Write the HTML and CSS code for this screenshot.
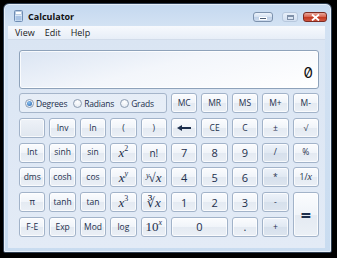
FILE: index.html
```html
<!DOCTYPE html>
<html lang="en">
  <head>
    <meta charset="UTF-8" />
    <title>Calculator</title>
    <link rel="stylesheet" href="styles.css">
  </head>
  <body>
    <div class="window">
      <div class="titlebar">
        <svg class="app-icon" width="9" height="12" viewBox="0 0 9 12">
          <rect x="0.5" y="0.5" width="8" height="11" rx="1" fill="#dbe8f7" stroke="#6f8db4" />
          <rect x="1.5" y="1.5" width="6" height="3" fill="#ffffff" stroke="#9ab3d3" stroke-width="0.6" />
          <rect x="1.5" y="6" width="6" height="4.5" fill="#a9c3e4" />
        </svg>
        <span class="title">Calculator</span>
        <div class="caption-buttons">
          <span class="cap cap-min"><i></i></span>
          <span class="cap cap-max"><i></i></span>
          <span class="cap cap-close">
            <svg width="9" height="7" viewBox="0 0 9 7">
              <path d="M1 0.5 L8 6.5 M8 0.5 L1 6.5" stroke="#fff" stroke-width="1.8" />
            </svg>
          </span>
        </div>
      </div>
      <div class="menubar">
        <span>View</span>
        <span>Edit</span>
        <span>Help</span>
      </div>
      <div class="client">
        <div class="display">0</div>
        <div class="keypad">
          <div class="angles">
            <label><span class="radio checked"></span>Degrees</label>
            <label><span class="radio"></span>Radians</label>
            <label><span class="radio"></span>Grads</label>
          </div>
          <button class="key">MC</button>
          <button class="key">MR</button>
          <button class="key">MS</button>
          <button class="key">M+</button>
          <button class="key">M-</button>

          <button class="key key-blank"></button>
          <button class="key">Inv</button>
          <button class="key">ln</button>
          <button class="key">(</button>
          <button class="key">)</button>
          <button class="key">
            <svg width="14" height="6" viewBox="0 0 14 6">
              <path d="M0 3 L5 0 L5 6 Z" fill="#1d2f4c" />
              <rect x="4" y="2" width="10" height="2" fill="#1d2f4c" />
            </svg>
          </button>
          <button class="key">CE</button>
          <button class="key">C</button>
          <button class="key">±</button>
          <button class="key">√</button>

          <button class="key">Int</button>
          <button class="key">sinh</button>
          <button class="key">sin</button>
          <button class="key key-math"><i>x</i><sup>2</sup></button>
          <button class="key key-big">n!</button>
          <button class="key key-digit">7</button>
          <button class="key key-digit">8</button>
          <button class="key key-digit">9</button>
          <button class="key key-op">/</button>
          <button class="key">%</button>

          <button class="key">dms</button>
          <button class="key">cosh</button>
          <button class="key">cos</button>
          <button class="key key-math"><i>x</i><sup><i>y</i></sup></button>
          <button class="key key-math"><span class="root"><sup><i>y</i></sup>√</span><i>x</i></button>
          <button class="key key-digit">4</button>
          <button class="key key-digit">5</button>
          <button class="key key-digit">6</button>
          <button class="key key-op">*</button>
          <button class="key">1/<i class="serif">x</i></button>

          <button class="key">π</button>
          <button class="key">tanh</button>
          <button class="key">tan</button>
          <button class="key key-math"><i>x</i><sup>3</sup></button>
          <button class="key key-math">∛<i>x</i></button>
          <button class="key key-digit">1</button>
          <button class="key key-digit">2</button>
          <button class="key key-digit">3</button>
          <button class="key key-op">-</button>
          <button class="key key-equals">=</button>

          <button class="key">F-E</button>
          <button class="key">Exp</button>
          <button class="key">Mod</button>
          <button class="key">log</button>
          <button class="key key-math">10<sup><i>x</i></sup></button>
          <button class="key key-digit key-zero">0</button>
          <button class="key key-digit">.</button>
          <button class="key key-op">+</button>
        </div>
      </div>
    </div>
  </body>
</html>
```

FILE: styles.css
```css
* {
  box-sizing: border-box;
}

body {
  margin: 0;
  background-color: #000;
  font-family: "Open Sans", "Noto Sans", sans-serif;
}

.window {
  margin: 3px 0 0 3px;
  width: 329px;
  height: 250px;
  border: 1px solid #2e3e52;
  border-radius: 6px 6px 2px 2px;
  background: linear-gradient(#c4d8ef, #d3e2f3 22px, #c9dcf0);
  box-shadow: inset 0 0 0 1px rgba(255, 255, 255, 0.55);
  padding: 0 6px 4px 4px;
  display: flex;
  flex-direction: column;
}

.titlebar {
  height: 22px;
  display: flex;
  align-items: center;
  padding-left: 6px;
}

.app-icon {
  margin-top: 2px;
}

.title {
  margin-left: 5px;
  margin-top: 2px;
  font-size: 9px;
  font-weight: bold;
  color: #111;
}

.caption-buttons {
  margin-left: auto;
  margin-right: -2px;
  margin-top: 4px;
  display: flex;
  align-items: center;
}

.cap {
  height: 10px;
  border-radius: 3px;
  display: flex;
  align-items: center;
  justify-content: center;
}

.cap-min {
  width: 20px;
  border: 1px solid #7d92ad;
  background: linear-gradient(#eef4fb, #d4e1f1 50%, #bfd1e8 51%, #cfdcee);
}

.cap-min i {
  width: 8px;
  height: 3px;
  margin-top: 3px;
  background-color: #4b5d75;
  border: 1px solid #fff;
}

.cap-max {
  width: 16px;
  margin-left: 9px;
  border: 1px solid #b7c8dd;
  background: linear-gradient(#e7eff9, #d3e0f1);
}

.cap-max i {
  width: 7px;
  height: 5px;
  border: 1px solid #7f90a8;
  border-top-width: 2px;
}

.cap-close {
  width: 24px;
  margin-left: 5px;
  border: 1px solid #7d2b22;
  background: linear-gradient(#e9a89c, #d6604c 50%, #c2371f 51%, #d0553f);
}

.menubar {
  height: 14px;
  display: flex;
  align-items: center;
  gap: 10px;
  padding-left: 7px;
  font-size: 9px;
  color: #1a1a1a;
  background: linear-gradient(#f7f9fd, #e7eef7);
  border-bottom: 1px solid #d2dcea;
}

.client {
  flex: 1;
  padding: 10px 6px 0 11px;
  background: linear-gradient(#dae5f3, #e3ebf6);
}

.display {
  height: 39px;
  width: 300px;
  border: 1px solid #8ea2ba;
  border-radius: 3px;
  background: linear-gradient(165deg, #dbe5f3, #f3f6fb 45%, #ffffff);
  box-shadow: inset 0 0 0 1px rgba(255, 255, 255, 0.8);
  display: flex;
  align-items: flex-end;
  justify-content: flex-end;
  padding: 0 5px 8px 0;
  font-family: "Inter", sans-serif;
  font-feature-settings: "zero";
  font-size: 15px;
  line-height: 15px;
  color: #111;
}

.keypad {
  margin-top: 4px;
  width: 300px;
  display: grid;
  grid-template-columns: repeat(10, 1fr);
  grid-auto-rows: 20px;
  column-gap: 4px;
  row-gap: 4.8px;
}

.angles {
  grid-column: span 5;
  border: 1px solid #a5b5ca;
  border-radius: 3px;
  background: rgba(255, 255, 255, 0.3);
  display: flex;
  align-items: center;
  padding-left: 5px;
  gap: 6px;
  font-size: 8.5px;
  letter-spacing: -0.2px;
  color: #1d2f4c;
}

.angles label {
  display: flex;
  align-items: center;
  gap: 2px;
}

.radio {
  width: 9px;
  height: 9px;
  border-radius: 50%;
  border: 1px solid #8c9cb1;
  background: radial-gradient(circle at 50% 30%, #ffffff, #dfe6ef);
  display: flex;
  align-items: center;
  justify-content: center;
}

.radio.checked::after {
  content: "";
  width: 5px;
  height: 5px;
  border-radius: 50%;
  background: radial-gradient(circle at 40% 35%, #8ec3f2, #1d5da8);
}

.key {
  border: 1px solid #a2b3c9;
  border-radius: 3px;
  background: linear-gradient(#fbfcfe, #f0f4f9 50%, #e4eaf2 51%, #ebf0f6);
  box-shadow: inset 0 0 0 1px rgba(255, 255, 255, 0.75);
  padding: 0;
  display: flex;
  align-items: center;
  justify-content: center;
  font-family: "Open Sans", "Noto Sans", sans-serif;
  font-size: 8.5px;
  color: #1d2f4c;
  line-height: 1;
}

.key-blank {
  background: linear-gradient(#eef2f8, #dfe6ef);
}

.key-op {
  background: linear-gradient(#eef3fa, #e0e8f2 50%, #d6e0ec 51%, #dde5ef);
}

.key-digit {
  font-size: 11px;
}

.key-big {
  font-size: 10px;
}

.key-math {
  font-family: "Liberation Serif", "DejaVu Serif", serif;
  font-size: 13px;
}

.key sup {
  font-size: 8px;
  line-height: 0;
  position: relative;
  top: -3.5px;
  vertical-align: baseline;
}

.root sup {
  margin-right: -1px;
}

.serif {
  font-family: "Liberation Serif", serif;
  font-size: 10px;
}

.key-equals {
  grid-row: span 2;
  font-size: 18px;
  font-weight: bold;
}

.key-zero {
  grid-column: span 2;
}
```
